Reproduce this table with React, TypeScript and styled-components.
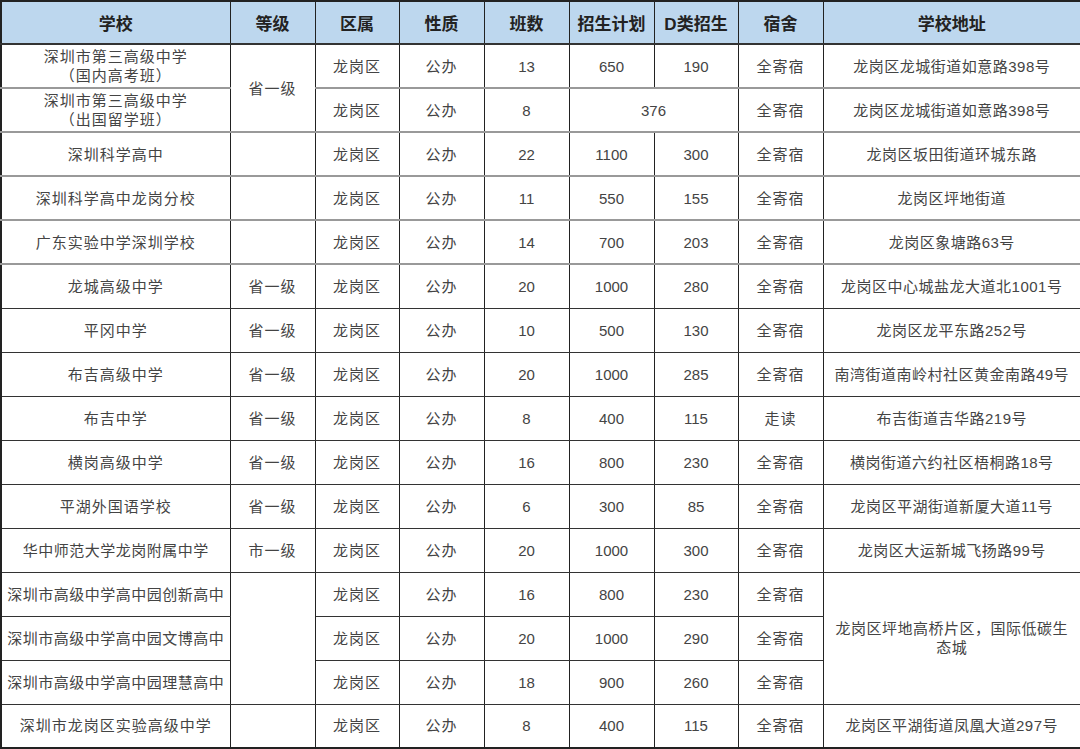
import React from 'react';
import styled, { createGlobalStyle } from 'styled-components';

const GlobalStyle = createGlobalStyle`
  html, body {
    margin: 0;
    padding: 0;
    background: #fff;
  }
  body {
    font-family: "Liberation Sans", "Noto Sans CJK SC", sans-serif;
  }
`;

const Table = styled.table`
  width: 1080px;
  height: 748px;
  table-layout: fixed;
  border-collapse: collapse;
  border: 2px solid #222;
`;

const HeadCell = styled.th`
  height: 41px;
  padding: 0;
  background: #bdd7ee;
  color: #222;
  font-size: 17px;
  font-weight: bold;
  text-align: center;
  border-left: 1px solid #222;
  border-right: 1px solid #222;
  border-bottom: 2px solid #333;
`;

const Row = styled.tr<{ $soft?: boolean }>`
  height: 44px;
  td {
    border-top: ${(p) => (p.$soft ? '2px solid #999' : '1px solid #333')};
  }
`;

const Cell = styled.td<{ $tight?: boolean; $num?: boolean }>`
  padding: 0 2px;
  color: #444;
  font-size: 15px;
  line-height: 19px;
  letter-spacing: ${(p) => (p.$num ? '0' : p.$tight ? '0.5px' : '1px')};
  text-align: center;
  vertical-align: middle;
  border-left: 1px solid #222;
  border-right: 1px solid #222;
  border-bottom: 1px solid #333;
  white-space: nowrap;
`;

const Wrap = styled.span`
  white-space: normal;
  display: block;
  padding: 0 4px;
`;

const headers = ['学校', '等级', '区属', '性质', '班数', '招生计划', 'D类招生', '宿舍', '学校地址'];
const widths = [229, 85, 84, 85, 85, 85, 84, 85, 258];

type School = {
  name: string;
  level: string;
  classes: string;
  plan: string;
  d: string;
  dorm: string;
  addr: string;
};

// rows 3..12, simple rows
const simple: School[] = [
  { name: '深圳科学高中', level: '', classes: '22', plan: '1100', d: '300', dorm: '全寄宿', addr: '龙岗区坂田街道环城东路' },
  { name: '深圳科学高中龙岗分校', level: '', classes: '11', plan: '550', d: '155', dorm: '全寄宿', addr: '龙岗区坪地街道' },
  { name: '广东实验中学深圳学校', level: '', classes: '14', plan: '700', d: '203', dorm: '全寄宿', addr: '龙岗区象塘路63号' },
  { name: '龙城高级中学', level: '省一级', classes: '20', plan: '1000', d: '280', dorm: '全寄宿', addr: '龙岗区中心城盐龙大道北1001号' },
  { name: '平冈中学', level: '省一级', classes: '10', plan: '500', d: '130', dorm: '全寄宿', addr: '龙岗区龙平东路252号' },
  { name: '布吉高级中学', level: '省一级', classes: '20', plan: '1000', d: '285', dorm: '全寄宿', addr: '南湾街道南岭村社区黄金南路49号' },
  { name: '布吉中学', level: '省一级', classes: '8', plan: '400', d: '115', dorm: '走读', addr: '布吉街道吉华路219号' },
  { name: '横岗高级中学', level: '省一级', classes: '16', plan: '800', d: '230', dorm: '全寄宿', addr: '横岗街道六约社区梧桐路18号' },
  { name: '平湖外国语学校', level: '省一级', classes: '6', plan: '300', d: '85', dorm: '全寄宿', addr: '龙岗区平湖街道新厦大道11号' },
  { name: '华中师范大学龙岗附属中学', level: '市一级', classes: '20', plan: '1000', d: '300', dorm: '全寄宿', addr: '龙岗区大运新城飞扬路99号' },
];

const park = [
  { name: '深圳市高级中学高中园创新高中', classes: '16', plan: '800', d: '230' },
  { name: '深圳市高级中学高中园文博高中', classes: '20', plan: '1000', d: '290' },
  { name: '深圳市高级中学高中园理慧高中', classes: '18', plan: '900', d: '260' },
];

const App = () => {
  return (
    <>
      <GlobalStyle />
      <Table>
        <colgroup>
          {widths.map((w, i) => (
            <col key={i} style={{ width: w }} />
          ))}
        </colgroup>
        <thead>
          <tr>
            {headers.map((h) => (
              <HeadCell key={h}>{h}</HeadCell>
            ))}
          </tr>
        </thead>
        <tbody>
          <Row $soft>
            <Cell>
              深圳市第三高级中学
              <br />
              （国内高考班）
            </Cell>
            <Cell rowSpan={2}>省一级</Cell>
            <Cell>龙岗区</Cell>
            <Cell>公办</Cell>
            <Cell $num>13</Cell>
            <Cell $num>650</Cell>
            <Cell $num>190</Cell>
            <Cell>全寄宿</Cell>
            <Cell $tight>龙岗区龙城街道如意路398号</Cell>
          </Row>
          <Row $soft>
            <Cell>
              深圳市第三高级中学
              <br />
              （出国留学班）
            </Cell>
            <Cell>龙岗区</Cell>
            <Cell>公办</Cell>
            <Cell $num>8</Cell>
            <Cell $num colSpan={2}>376</Cell>
            <Cell>全寄宿</Cell>
            <Cell $tight>龙岗区龙城街道如意路398号</Cell>
          </Row>
          {simple.map((s, i) => (
            <Row key={s.name} $soft={i < 4}>
              <Cell $tight={s.name.length > 10}>{s.name}</Cell>
              <Cell>{s.level}</Cell>
              <Cell>龙岗区</Cell>
              <Cell>公办</Cell>
              <Cell $num>{s.classes}</Cell>
              <Cell $num>{s.plan}</Cell>
              <Cell $num>{s.d}</Cell>
              <Cell>{s.dorm}</Cell>
              <Cell $tight>{s.addr}</Cell>
            </Row>
          ))}
          {park.map((p, i) => (
            <Row key={p.name}>
              <Cell $tight>{p.name}</Cell>
              {i === 0 && <Cell rowSpan={3} />}
              <Cell>龙岗区</Cell>
              <Cell>公办</Cell>
              <Cell $num>{p.classes}</Cell>
              <Cell $num>{p.plan}</Cell>
              <Cell $num>{p.d}</Cell>
              <Cell>全寄宿</Cell>
              {i === 0 && (
                <Cell rowSpan={3} $tight>
                  <Wrap>龙岗区坪地高桥片区，国际低碳生态城</Wrap>
                </Cell>
              )}
            </Row>
          ))}
          <Row>
            <Cell>深圳市龙岗区实验高级中学</Cell>
            <Cell />
            <Cell>龙岗区</Cell>
            <Cell>公办</Cell>
            <Cell $num>8</Cell>
            <Cell $num>400</Cell>
            <Cell $num>115</Cell>
            <Cell>全寄宿</Cell>
            <Cell $tight>龙岗区平湖街道凤凰大道297号</Cell>
          </Row>
        </tbody>
      </Table>
    </>
  );
};

export default App;
